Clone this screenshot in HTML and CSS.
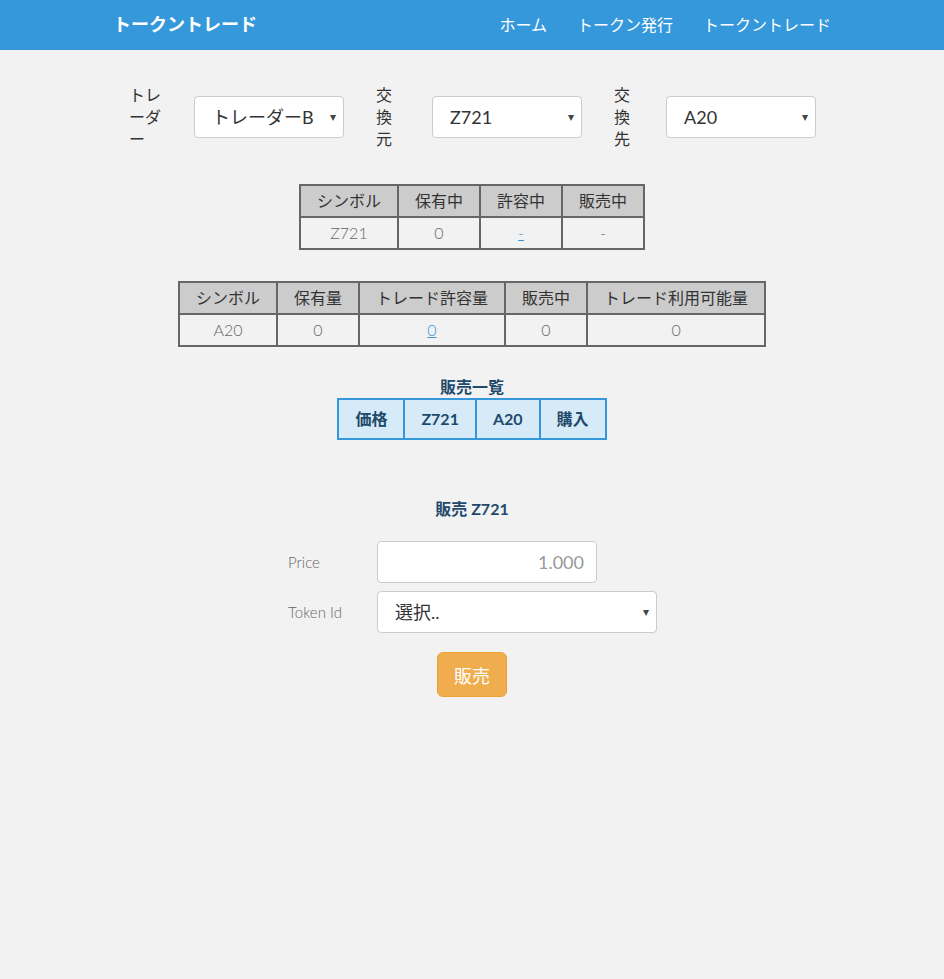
FILE: index.html
```html
<!DOCTYPE html>
<html lang="ja">
<head>
<meta charset="utf-8">
<title>トークントレード</title>
<link rel="stylesheet" href="styles.css">
</head>
<body>
<nav class="navbar">
  <div class="container nav-inner">
    <a class="brand" href="#">トークントレード</a>
    <ul class="nav-links">
      <li><a href="#">ホーム</a></li>
      <li><a href="#">トークン発行</a></li>
      <li><a href="#">トークントレード</a></li>
    </ul>
  </div>
</nav>

<main class="container">
  <div class="select-row">
    <label class="lbl lbl-1">トレーダー</label>
    <div class="fake-select sel-1"><span>トレーダーB</span><span class="caret">▾</span></div>
    <label class="lbl lbl-2">交換元</label>
    <div class="fake-select sel-2"><span>Z721</span><span class="caret">▾</span></div>
    <label class="lbl lbl-3">交換先</label>
    <div class="fake-select sel-3"><span>A20</span><span class="caret">▾</span></div>
  </div>

  <table class="grid-table t1">
    <thead>
      <tr><th>シンボル</th><th>保有中</th><th>許容中</th><th>販売中</th></tr>
    </thead>
    <tbody>
      <tr><td>Z721</td><td>0</td><td><a href="#">-</a></td><td>-</td></tr>
    </tbody>
  </table>

  <table class="grid-table t2">
    <thead>
      <tr><th>シンボル</th><th>保有量</th><th>トレード許容量</th><th>販売中</th><th>トレード利用可能量</th></tr>
    </thead>
    <tbody>
      <tr><td>A20</td><td>0</td><td><a href="#">0</a></td><td>0</td><td>0</td></tr>
    </tbody>
  </table>

  <table class="sale-table">
    <caption>販売一覧</caption>
    <thead>
      <tr><th>価格</th><th>Z721</th><th>A20</th><th>購入</th></tr>
    </thead>
  </table>

  <section class="sell">
    <h4 class="sell-title">販売 Z721</h4>
    <div class="form-grid">
      <label class="form-label">Price</label>
      <div class="input price-input"><span>1.000</span></div>
      <label class="form-label">Token Id</label>
      <div class="fake-select token-select"><span>選択..</span><span class="caret">▾</span></div>
    </div>
    <div class="btn-row">
      <button class="btn-sell" type="button">販売</button>
    </div>
  </section>
</main>
</body>
</html>
```

FILE: styles.css
```css
* { box-sizing: border-box; }

html, body {
  margin: 0;
  padding: 0;
}

body {
  background: #f2f2f2;
  font-family: Lato, "Noto Sans CJK JP", sans-serif;
  font-size: 16px;
  color: #333;
  line-height: 22px;
}

.container {
  width: 720px;
  margin: 0 auto;
}

.navbar {
  background: #3498db;
  height: 50px;
}

.nav-inner {
  display: flex;
  align-items: center;
  justify-content: space-between;
  height: 50px;
}

.brand {
  color: #fff;
  font-weight: bold;
  font-size: 18px;
  text-decoration: none;
  margin-left: 1px;
  line-height: 50px;
  margin-top: -2px;
}

.nav-links {
  list-style: none;
  margin: 0;
  padding: 0;
  display: flex;
}

.nav-links li a {
  display: block;
  color: #fff;
  text-decoration: none;
  font-size: 16px;
  padding: 0 15px;
  line-height: 50px;
}

.nav-links li:last-child a {
  padding-right: 1px;
}

/* selection row */
.select-row {
  display: flex;
  align-items: center;
  margin-top: 34px;
  height: 66px;
}

.lbl {
  font-size: 16px;
  line-height: 22px;
  color: #333;
  word-break: break-all;
}

.lbl-1 { width: 33px; margin-left: 17px; }
.lbl-2 { width: 20px; margin-left: 32px; }
.lbl-3 { width: 20px; margin-left: 32px; }

.fake-select {
  display: flex;
  align-items: center;
  justify-content: space-between;
  height: 42px;
  background: #fff;
  border: 1px solid #ccc;
  border-radius: 4px;
  padding: 0 7px 0 17px;
  font-size: 18px;
  color: #333;
}

.caret {
  font-size: 12px;
  color: #444;
}

.sel-1 { width: 150px; margin-left: 32px; }
.sel-2 { width: 150px; margin-left: 36px; }
.sel-3 { width: 150px; margin-left: 32px; }

/* data tables */
.grid-table {
  border-collapse: collapse;
  margin: 0 auto;
  border: 2px solid #666;
}

.grid-table th,
.grid-table td {
  border: 2px solid #666;
  padding: 0 16px;
  height: 32px;
  text-align: center;
  white-space: nowrap;
  font-size: 16px;
  line-height: 20px;
}

.grid-table th {
  background: #ccc;
  font-weight: normal;
  color: #333;
}

.grid-table td {
  color: #666;
  font-weight: 300;
}

.grid-table td a {
  color: #3498db;
}

.t1 { margin-top: 34px; }
.t2 { margin-top: 31px; }

/* sale list */
.sale-table {
  border-collapse: collapse;
  margin: 30px auto 0;
  border: 2px solid #3498db;
}

.sale-table caption {
  font-weight: bold;
  color: #1f4a6b;
  font-size: 16px;
  line-height: 20px;
  padding-bottom: 1px;
}

.sale-table th {
  border: 2px solid #3498db;
  background: #d6eaf8;
  color: #1f4a6b;
  font-weight: bold;
  padding: 0 16px;
  height: 40px;
  font-size: 16px;
  white-space: nowrap;
}

/* sell form */
.sell {
  margin-top: 58px;
}

.sell-title {
  text-align: center;
  margin: 0;
  font-size: 16px;
  font-weight: bold;
  color: #1f4a6b;
  line-height: 22px;
}

.form-grid {
  display: grid;
  grid-template-columns: 89px auto;
  justify-content: start;
  align-items: center;
  row-gap: 8px;
  margin-top: 21px;
  margin-left: 176px;
}

.form-label {
  font-size: 15px;
  color: #666;
  font-weight: 300;
}

.input {
  height: 42px;
  background: #fff;
  border: 1px solid #ccc;
  border-radius: 4px;
  display: flex;
  align-items: center;
  justify-content: flex-end;
  padding: 0 12px;
  font-size: 18px;
  color: #999;
}

.price-input { width: 220px; }
.token-select { width: 280px; padding-left: 17px; }

.btn-row {
  display: flex;
  justify-content: center;
  margin-top: 19px;
}

.btn-sell {
  width: 70px;
  height: 45px;
  background: #f0ad4e;
  border: 1px solid #eea236;
  border-radius: 6px;
  color: #fff;
  font-family: Lato, "Noto Sans CJK JP", sans-serif;
  font-size: 18px;
  padding: 0;
}
```
